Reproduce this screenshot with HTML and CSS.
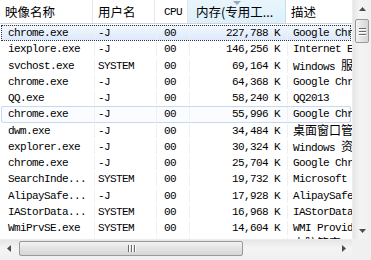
FILE: index.html
```html
<!DOCTYPE html>
<html>
<head>
<meta charset="utf-8">
<link rel="stylesheet" href="styles.css">
</head>
<body>
<div class="win">
  <div class="view">
    <div class="hdr">
      <div class="hc cn">映像名称</div>
      <div class="hc cn">用户名</div>
      <div class="hc lat">CPU</div>
      <div class="hc cn sorted"><span class="arrow"></span>内存(专用工...</div>
      <div class="hc cn">描述</div>
    </div>
    <div class="rows">
      <div class="row sel"><div class="c">chrome.exe</div><div class="c">-J</div><div class="c">00</div><div class="c num">227,788 K</div><div class="c">Google Chrome</div></div>
      <div class="row"><div class="c">iexplore.exe</div><div class="c">-J</div><div class="c">00</div><div class="c num">146,256 K</div><div class="c">Internet Explorer</div></div>
      <div class="row"><div class="c">svchost.exe</div><div class="c">SYSTEM</div><div class="c">00</div><div class="c num">69,164 K</div><div class="c">Windows <span class="zh">服务主进程</span></div></div>
      <div class="row"><div class="c">chrome.exe</div><div class="c">-J</div><div class="c">00</div><div class="c num">64,368 K</div><div class="c">Google Chrome</div></div>
      <div class="row"><div class="c">QQ.exe</div><div class="c">-J</div><div class="c">00</div><div class="c num">58,240 K</div><div class="c">QQ2013</div></div>
      <div class="row hov"><div class="c">chrome.exe</div><div class="c">-J</div><div class="c">00</div><div class="c num">55,996 K</div><div class="c">Google Chrome</div></div>
      <div class="row"><div class="c">dwm.exe</div><div class="c">-J</div><div class="c">00</div><div class="c num">34,484 K</div><div class="c"><span class="zh">桌面窗口管理器</span></div></div>
      <div class="row"><div class="c">explorer.exe</div><div class="c">-J</div><div class="c">00</div><div class="c num">30,324 K</div><div class="c">Windows <span class="zh">资源管理器</span></div></div>
      <div class="row"><div class="c">chrome.exe</div><div class="c">-J</div><div class="c">00</div><div class="c num">25,704 K</div><div class="c">Google Chrome</div></div>
      <div class="row"><div class="c">SearchInde...</div><div class="c">SYSTEM</div><div class="c">00</div><div class="c num">19,732 K</div><div class="c">Microsoft Windows</div></div>
      <div class="row"><div class="c">AlipaySafe...</div><div class="c">-J</div><div class="c">00</div><div class="c num">17,928 K</div><div class="c">AlipaySafeTran</div></div>
      <div class="row"><div class="c">IAStorData...</div><div class="c">SYSTEM</div><div class="c">00</div><div class="c num">16,968 K</div><div class="c">IAStorDataMgr</div></div>
      <div class="row"><div class="c">WmiPrvSE.exe</div><div class="c">SYSTEM</div><div class="c">00</div><div class="c num">14,604 K</div><div class="c">WMI Provider</div></div>
      <div class="row"><div class="c">CCSRTRP</div><div class="c">SYSTEM</div><div class="c">00</div><div class="c num">13,056 K</div><div class="c"><span class="zh">电脑管家</span> S</div></div>
    </div>
  </div>
  <div class="vscroll">
    <div class="sbtn"><svg width="7" height="4" viewBox="0 0 7 4"><path d="M0 4 L3.5 0 L7 4 Z" fill="#4d4d4d"/></svg></div>
    <div class="vtrack"><div class="vthumb"><span class="grip"></span><span class="grip"></span><span class="grip"></span></div></div>
    <div class="sbtn"><svg width="7" height="4" viewBox="0 0 7 4"><path d="M0 0 L3.5 4 L7 0 Z" fill="#4d4d4d"/></svg></div>
  </div>
  <div class="hscroll">
    <div class="hbtn"><svg width="4" height="7" viewBox="0 0 4 7"><path d="M4 0 L0 3.5 L4 7 Z" fill="#4d4d4d"/></svg></div>
    <div class="htrack"><div class="hthumb"><span class="hgrip"></span><span class="hgrip"></span><span class="hgrip"></span></div></div>
    <div class="hbtn"><svg width="4" height="7" viewBox="0 0 4 7"><path d="M0 0 L4 3.5 L0 7 Z" fill="#4d4d4d"/></svg></div>
  </div>
  <div class="corner"></div>
</div>
</body>
</html>
```
FILE: styles.css
```css
html, body { margin: 0; padding: 0; background: #fff; }
.win {
  width: 371px; height: 260px; overflow: hidden;
  display: grid;
  grid-template-columns: 352px 19px;
  grid-template-rows: 239px 21px;
  background: #fff;
}
.view { overflow: hidden; position: relative; }
.hdr {
  display: grid;
  grid-template-columns: 93px 62px 33px 98px 120px;
  height: 24px;
  border-bottom: 1px solid #d5d5d5;
  box-sizing: border-box;
  background: #fff;
}
.hc {
  border-right: 1px solid #e3e6ea;
  padding-left: 5px;
  display: flex; align-items: center;
  white-space: nowrap; overflow: hidden;
  color: #000;
  position: relative;
}
.cn { font-family: "Noto Sans CJK SC", sans-serif; font-size: 12.5px; }
.lat { font-family: "Liberation Mono", monospace; font-size: 11px; letter-spacing: -0.6px; padding-left: 9px; }
.sorted { background: linear-gradient(#e9f5fc, #dcf0fb); padding-left: 8px; border-right-color: #c6dff0; }
.arrow {
  position: absolute; left: 45px; top: 1px;
  width: 0; height: 0;
  border-left: 4px solid transparent; border-right: 4px solid transparent;
  border-top: 4px solid #97a7bb;
}
.rows { padding-top: 1px; }
.row {
  display: grid;
  grid-template-columns: 93px 62px 33px 98px 120px;
  height: 16.25px;
  box-sizing: border-box;
  font-family: "Liberation Mono", "Noto Sans CJK SC", monospace;
  font-size: 11px; letter-spacing: -0.6px;
  color: #000;
  align-items: center;
  border: 1px solid transparent;
  margin: 0 1px;
}
.row .c { white-space: nowrap; overflow: hidden; padding-left: 6px; border-right: 1px solid #f0f0f0; line-height: 14px; }
.row .c:nth-child(2) { padding-left: 3px; }
.row .c:nth-child(3) { padding-left: 7px; }
.row .c:nth-child(5) { padding-left: 5px; }
.row .num { text-align: right; padding: 0 7px 0 0; }
.zh { font-family: "Noto Sans CJK SC", sans-serif; font-size: 12px; letter-spacing: 0; }
.row.sel {
  background: linear-gradient(#f1f7fe, #dce9fa);
  border: 1px dotted #303840;
}
.row.hov {
  background: #fafcff;
  border: 1px solid #c5d9ef;
  border-radius: 2px;
}
.vscroll {
  background: linear-gradient(90deg, #e6e6e6, #f4f4f4 40%, #f0f0f0);
  display: flex; flex-direction: column;
  border-left: 1px solid #ececec;
}
.sbtn { height: 17px; display: flex; align-items: center; justify-content: center; }
.vtrack { flex: 1; padding: 1px 1px; }
.vthumb {
  height: 22px; margin: 1px 1px 0 1px;
  border: 1px solid #999;
  border-radius: 2px;
  background: linear-gradient(90deg, #f3f3f3, #e3e3e3 50%, #d6d6d6);
  display: flex; flex-direction: column; align-items: center; justify-content: center; gap: 2px;
}
.grip { width: 7px; height: 1px; background: #6a6a6a; box-shadow: 0 1px 0 #fff; }
.hscroll {
  background: linear-gradient(#e6e6e6, #f4f4f4 40%, #f0f0f0);
  display: flex; align-items: stretch;
  border-top: 1px solid #ececec;
  padding-bottom: 3px;
}
.hbtn { width: 17px; display: flex; align-items: center; justify-content: center; }
.htrack { flex: 1; padding: 1px 0; display: flex; }
.hthumb {
  width: 222px; margin-left: 2px;
  border: 1px solid #999; border-radius: 2px;
  background: linear-gradient(#f3f3f3, #e3e3e3 50%, #d6d6d6);
  display: flex; align-items: center; justify-content: center; gap: 2px;
}
.hgrip { width: 1px; height: 7px; background: #6a6a6a; box-shadow: 1px 0 0 #fff; }
.corner { background: #f0f0f0; }
```
